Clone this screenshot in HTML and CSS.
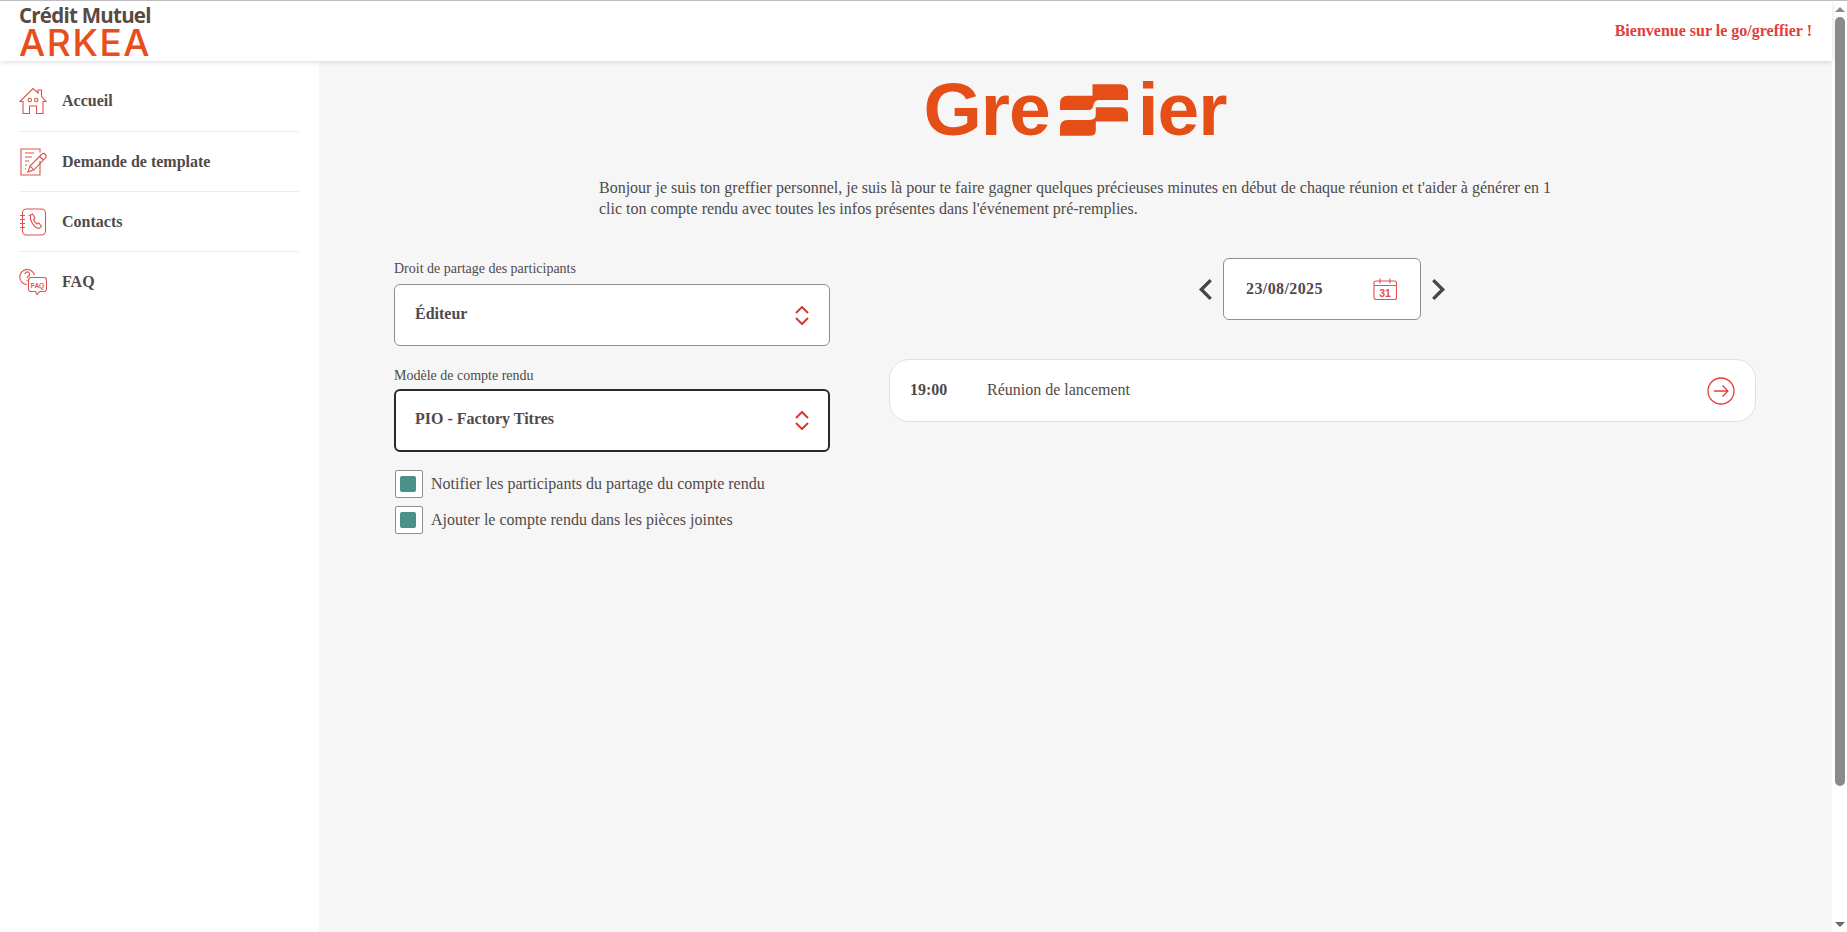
FILE: index.html
```html
<!DOCTYPE html>
<html lang="fr">
<head>
  <meta charset="UTF-8">
  <title>Greffier</title>
  <meta name="viewport" content="width=device-width, initial-scale=1">
  <link rel="stylesheet" href="styles.css">
</head>
<body>
  <div class="page">
    <header class="header">
      <div class="brand">
        <span class="brand-top">Crédit Mutuel</span>
        <span class="brand-name">ARKEA</span>
      </div>
      <span class="welcome">Bienvenue sur le go/greffier !</span>
    </header>
    <div class="layout">
      <nav class="sidebar">
        <a class="nav-item">
          <svg class="nav-icon" viewBox="0 0 28 28"><path d="M1 14.500 14 1.500l5 4.500V3h3.500v6.300L27 14.500h-3V26.500h-6.500V19h-7v7.500H4V14.500z"/><circle cx="10.800" cy="13" r="1.700"/><circle cx="17.200" cy="13" r="1.700"/></svg>
          <span>Accueil</span>
        </a>
        <a class="nav-item">
          <svg class="nav-icon" viewBox="0 0 28 28"><path d="M21 13V27H2V1h19v3.500M6 5h9M6 9h7M6 13h4M6 17h2M6 21h1"/><path d="M9 24l2-6L22.500 6.500a2.300 2.300 0 0 1 4 3.500L15 21.800zM11 18l4 3.800M20.500 8.500l4 3.500"/></svg>
          <span>Demande de template</span>
        </a>
        <a class="nav-item">
          <svg class="nav-icon" viewBox="0 0 28 28"><rect x="3.500" y="1" width="23" height="26" rx="4"/><path d="M1 7.500h5M1 11.500h5M1 15.500h5M1 19.500h5"/><path d="M11 7.500l2.500-1.500 2.500 4-1.500 1.500c.5 2 2 3.500 3.500 4.500l1.800-1 2.700 3.500-2 1.800c-4.500.5-10-7.500-9-12.800z"/></svg>
          <span>Contacts</span>
        </a>
        <a class="nav-item">
          <svg class="nav-icon" viewBox="0 0 28 28"><path d="M8 16.500A7.500 7.500 0 1 1 15.500 7M6 6a2.300 2.300 0 1 1 3.200 2.300c-.8.400-1 1-1 1.700M8.200 12v1"/><path d="M12 9.500h13a2.500 2.500 0 0 1 2.500 2.500v9a2.500 2.500 0 0 1-2.500 2.500h-4.500l-2.500 3-1.500-3H12a2.500 2.500 0 0 1-2.500-2.500v-9a2.500 2.500 0 0 1 2.500-2.500z"/><text class="faq-text" x="18.500" y="19.500">FAQ</text></svg>
          <span>FAQ</span>
        </a>
      </nav>
      <main class="main">
        <div class="logo" aria-label="Greffier">
          <span>Gre</span>
          <svg class="logo-mark" viewBox="30 22 205 156"><path d="M128 22H212Q235 22 235 45V70H150Q132 70 130 88Q128 100 115 100H30V80Q30 57 53 57H128Z"/><path d="M30 178V153Q30 130 53 130H120Q138 130 138 112V92H212Q235 92 235 115V135H138V160Q138 178 120 178Z"/></svg>
          <span>ier</span>
        </div>
        <p class="intro">Bonjour je suis ton greffier personnel, je suis là pour te faire gagner quelques précieuses minutes en début de chaque réunion et t'aider à générer en 1 clic ton compte rendu avec toutes les infos présentes dans l'événement pré-remplies.</p>
        <div class="columns">
          <section class="form">
            <label class="field-label">Droit de partage des participants</label>
            <div class="select">
              <span>Éditeur</span>
              <svg class="updown" viewBox="0 0 14 19"><path d="M1 7l6-6 6 6M1 12l6 6 6-6"/></svg>
            </div>
            <label class="field-label second">Modèle de compte rendu</label>
            <div class="select focused">
              <span>PIO - Factory Titres</span>
              <svg class="updown" viewBox="0 0 14 19"><path d="M1 7l6-6 6 6M1 12l6 6 6-6"/></svg>
            </div>
            <div class="check first">
              <span class="check-box"><span class="check-mark"></span></span>
              <span>Notifier les participants du partage du compte rendu</span>
            </div>
            <div class="check">
              <span class="check-box"><span class="check-mark"></span></span>
              <span>Ajouter le compte rendu dans les pièces jointes</span>
            </div>
          </section>
          <section class="agenda">
            <div class="date-row">
              <svg class="chevron" viewBox="0 0 14 22"><path d="M12 2 3 11l9 9"/></svg>
              <div class="date-box">
                <span>23/08/2025</span>
                <svg class="calendar" viewBox="0 0 24 22"><rect x="1" y="3" width="22.500" height="18.500" rx="2"/><path d="M1 7.500h22.500M7 .5v5M17 .5v5"/><text class="cal-text" x="12" y="19">31</text></svg>
              </div>
              <svg class="chevron" viewBox="0 0 14 22"><path d="M2 2l9 9-9 9"/></svg>
            </div>
            <div class="event">
              <b class="event-time">19:00</b>
              <span class="event-title">Réunion de lancement</span>
              <svg class="event-go" viewBox="0 0 28 28"><circle cx="14" cy="14" r="13"/><path d="M7 14h14M15.500 8.500 21 14l-5.500 5.500"/></svg>
            </div>
          </section>
        </div>
      </main>
    </div>
  </div>
  <div class="scrollbar">
    <span class="arrow-up"></span>
    <span class="thumb"></span>
    <span class="arrow-down"></span>
  </div>
</body>
</html>
```

FILE: styles.css
```css
html, body {
  height: 100%;
}
body {
  margin: 0;
  display: flex;
  overflow: hidden;
  font-family: 'Liberation Serif', 'Times New Roman', serif;
  font-size: 16px;
  color: #504a4a;
  background: #fff;
  border-top: 1px solid #bdbdbd;
  box-sizing: border-box;
}
.page {
  flex: 1;
  display: flex;
  flex-direction: column;
  min-width: 0;
}
.header {
  height: 60px;
  flex: none;
  display: flex;
  align-items: center;
  justify-content: space-between;
  padding: 0 20px 0 19px;
  background: #fff;
  box-shadow: 0 1px 5px rgba(0,0,0,0.14);
  position: relative;
}
.brand {
  display: flex;
  flex-direction: column;
  width: 132px;
}
.brand-top {
  font-family: 'Open Sans', sans-serif;
  font-weight: 700;
  font-size: 20.5px;
  line-height: 20px;
  letter-spacing: -0.75px;
  color: #5a4a45;
  white-space: nowrap;
}
.brand-name {
  font-family: Inter, sans-serif;
  font-weight: 500;
  font-size: 37px;
  line-height: 31px;
  margin-top: 2px;
  letter-spacing: 1.6px;
  color: #e84e1b;
}
.welcome {
  font-weight: bold;
  color: #e0403a;
}
.layout {
  flex: 1;
  display: flex;
  min-height: 0;
}
.sidebar {
  width: 280px;
  flex: none;
  padding: 10px 20px 0 19px;
  background: #fff;
}
.nav-item {
  display: flex;
  align-items: center;
  gap: 15px;
  height: 60px;
  font-weight: bold;
  border-bottom: 1px solid #eee;
  box-sizing: border-box;
}
.nav-item:first-child {
  height: 61px;
}
.nav-item:last-child {
  border-bottom: none;
}
.nav-icon {
  width: 28px;
  height: 28px;
  fill: none;
  stroke: #e0524b;
  stroke-width: 1.1;
}
.faq-text {
  font-family: 'Liberation Sans', Arial, sans-serif;
  font-size: 6.5px;
  font-weight: bold;
  text-anchor: middle;
  fill: #e0524b;
  stroke: none;
}
.main {
  flex: 1;
  min-width: 0;
  background: #f6f6f6;
  padding: 10px 76px 0 75px;
}
.logo {
  display: flex;
  justify-content: center;
  align-items: center;
  gap: 10px;
  height: 76px;
  font-family: 'Liberation Sans', Arial, sans-serif;
  font-weight: bold;
  font-size: 75px;
  letter-spacing: -1px;
  color: #e64e18;
}
.logo-mark {
  width: 68px;
  height: 52px;
  margin-top: 2px;
  fill: #e64e18;
}
.intro {
  width: 960px;
  margin: 30px 0 0 205px;
  line-height: 21px;
}
.columns {
  display: grid;
  grid-template-columns: 436px 1fr;
  gap: 59px;
  margin-top: 39px;
}
.form {
  padding-top: 2px;
}
.field-label {
  display: block;
  font-size: 14px;
  line-height: 18px;
  margin-bottom: 6px;
}
.field-label.second {
  margin-top: 21px;
  margin-bottom: 4px;
}
.select {
  display: flex;
  align-items: center;
  justify-content: space-between;
  height: 62px;
  padding: 0 20px 0 20px;
  box-sizing: border-box;
  background: #fff;
  border: 1px solid #8f8f8f;
  border-radius: 6px;
  font-weight: bold;
}
.select > span {
  position: relative;
  top: -1px;
}
.select.focused {
  height: 63px;
  border: 2px solid #2b2828;
  padding: 0 19px 0 19px;
}
.select.focused > span {
  top: -2px;
}
.updown {
  width: 14px;
  height: 19px;
  fill: none;
  stroke: #d9392f;
  stroke-width: 2;
}
.check {
  display: flex;
  align-items: center;
  gap: 8px;
  height: 28px;
  margin-top: 8px;
  padding-left: 1px;
}
.check.first {
  margin-top: 18px;
}
.check-box {
  width: 28px;
  height: 28px;
  flex: none;
  display: flex;
  align-items: center;
  justify-content: center;
  box-sizing: border-box;
  background: #fff;
  border: 1px solid #8f8f8f;
  border-radius: 2px;
}
.check-mark {
  width: 16px;
  height: 16px;
  margin-right: 2px;
  background: #4a9088;
  border-radius: 2px;
}
.date-row {
  display: flex;
  align-items: center;
  justify-content: center;
  gap: 10px;
  margin-left: -1px;
}
.chevron {
  width: 15px;
  height: 23px;
  fill: none;
  stroke: #4a4444;
  stroke-width: 3.2;
}
.date-box {
  width: 198px;
  height: 62px;
  box-sizing: border-box;
  display: flex;
  align-items: center;
  justify-content: space-between;
  padding: 0 23px 0 22px;
  background: #fff;
  border: 1px solid #8f8f8f;
  border-radius: 6px;
  font-weight: bold;
  letter-spacing: 0.4px;
}
.calendar {
  width: 24px;
  height: 22px;
  fill: none;
  stroke: #e0524b;
  stroke-width: 1.1;
}
.cal-text {
  font-family: 'Liberation Sans', Arial, sans-serif;
  font-size: 10.5px;
  letter-spacing: 0;
  text-anchor: middle;
  fill: #e0524b;
  stroke: none;
}
.event {
  display: flex;
  align-items: center;
  height: 63px;
  margin-top: 39px;
  padding: 0 20px;
  box-sizing: border-box;
  background: #fff;
  border: 1px solid #e0e0e0;
  border-radius: 20px;
}
.event-time {
  width: 77px;
  margin-top: -2px;
}
.event-title {
  flex: 1;
  margin-top: -2px;
}
.event-go {
  width: 28px;
  height: 28px;
  fill: none;
  stroke: #e0403a;
  stroke-width: 1.3;
}
.scrollbar {
  width: 15px;
  flex: none;
  display: flex;
  flex-direction: column;
  align-items: center;
  background: #fff;
}
.arrow-up, .arrow-down {
  width: 0;
  height: 0;
  border-left: 5px solid transparent;
  border-right: 5px solid transparent;
}
.arrow-up {
  margin: 6px 0 5px;
  border-bottom: 5px solid #8a8a8a;
}
.arrow-down {
  margin: auto 0 5px;
  border-top: 5px solid #6a6a6a;
}
.thumb {
  width: 10px;
  height: 769px;
  background: #8a8a8a;
  border-radius: 5px;
}
```
